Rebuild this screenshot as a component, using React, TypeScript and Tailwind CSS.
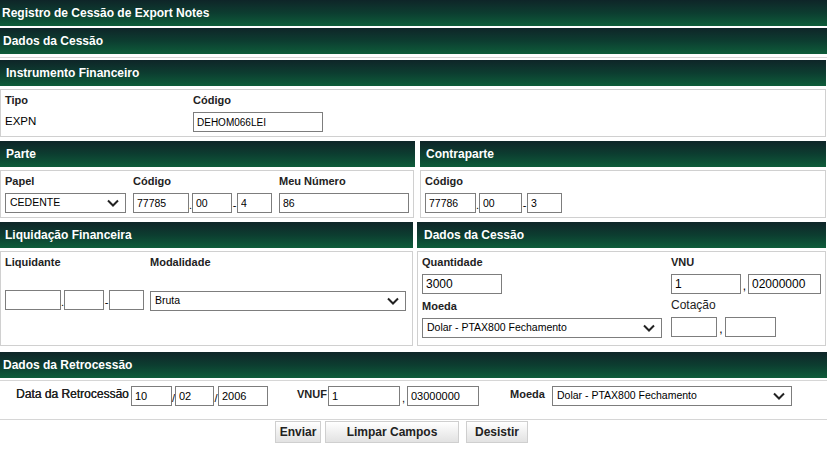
import React from "react";

const Hdr = ({ children, className = "" }: any) => (
  <div
    className={`h-[26px] flex items-center text-white font-bold text-[12px] bg-linear-to-b from-[#0e2528] via-[#0c3d30] to-[#0e5d3a] ${className}`}
  >
    {children}
  </div>
);

const Lbl = ({ children, className = "" }: any) => (
  <div className={`h-[14px] leading-[14px] text-[11px] font-bold text-[#222] whitespace-nowrap ${className}`}>
    {children}
  </div>
);

const Inp = ({ v = "", className = "" }: any) => (
  <input
    readOnly
    value={v}
    className={`h-[20px] border border-[#7d7d7d] bg-white px-[3px] text-[10.5px] text-black outline-none ${className}`}
  />
);

const Sel = ({ v, className = "" }: any) => (
  <div
    className={`h-[20px] border border-[#7d7d7d] bg-white pl-[4px] pr-[6px] flex items-center justify-between text-[10.5px] text-black ${className}`}
  >
    <span>{v}</span>
    <svg width="12" height="8" viewBox="0 0 12 8">
      <path d="M1 1.5 L6 6.5 L11 1.5" fill="none" stroke="#222" strokeWidth="2" />
    </svg>
  </div>
);

// little "." "-" "/" "," between the split inputs
const Sep = ({ c, className = "w-[3px]" }: any) => (
  <span className={`text-[11px] text-black flex items-end justify-center h-[20px] leading-[16px] ${className}`}>{c}</span>
);

const Box = ({ children, className = "" }: any) => (
  <div className={`border border-[#d0d0d0] bg-white ${className}`}>{children}</div>
);

const Btn = ({ children, className = "" }: any) => (
  <button
    className={`h-[22px] border border-[#cfcfcf] bg-linear-to-b from-white to-[#e2e2e2] ${className}`}
  >
    {children}
  </button>
);

export default function App() {
  return (
    <div
      className="w-[827px] h-[450px] bg-white overflow-hidden text-[#222]"
      style={{ fontFamily: '"Liberation Sans", Arial, sans-serif' }}
    >
      <Hdr className="h-[25px] pl-[2px]">Registro de Cessão de Export Notes</Hdr>
      <Hdr className="mt-[2px] pl-[3px]">Dados da Cessão</Hdr>
      <div className="mt-[3px] h-px bg-[#d6d6d6]" />

      <div className="mt-[2px] w-[826px]">
        <Hdr className="pl-[6px]">Instrumento Financeiro</Hdr>
        <Box className="mt-[3px] h-[48px] pt-[3px] pl-[4px] flex">
          <div className="w-[188px]">
            <Lbl>Tipo</Lbl>
            <div className="mt-[5px] h-[20px] flex items-center text-[11.5px] text-black">EXPN</div>
          </div>
          <div>
            <Lbl>Código</Lbl>
            <Inp v="DEHOM066LEI" className="mt-[5px] w-[130px] text-[10px]" />
          </div>
        </Box>
      </div>

      <div className="mt-[4px] flex w-[826px] justify-between">
        <div className="w-[415px]">
          <Hdr className="pl-[6px]">Parte</Hdr>
          <Box className="mt-[3px] h-[48px] pt-[3px] pl-[4px] w-[414px] flex">
            <div className="w-[128px]">
              <Lbl>Papel</Lbl>
              <Sel v="CEDENTE" className="mt-[5px] w-[121px]" />
            </div>
            <div className="w-[146px]">
              <Lbl>Código</Lbl>
              <div className="mt-[5px] flex">
                <Inp v="77785" className="w-[56px]" />
                <Sep c="." />
                <Inp v="00" className="w-[40px]" />
                <Sep c="-" className="w-[5px]" />
                <Inp v="4" className="w-[35px]" />
              </div>
            </div>
            <div>
              <Lbl>Meu Número</Lbl>
              <Inp v="86" className="mt-[5px] w-[130px]" />
            </div>
          </Box>
        </div>
        <div className="w-[406px]">
          <Hdr className="pl-[6px]">Contraparte</Hdr>
          <Box className="mt-[3px] h-[48px] pt-[3px] pl-[4px] w-[406px]">
            <Lbl>Código</Lbl>
            <div className="mt-[5px] flex">
              <Inp v="77786" className="w-[51px]" />
              <Sep c="." />
              <Inp v="00" className="w-[43px]" />
              <Sep c="-" className="w-[5px]" />
              <Inp v="3" className="w-[35px]" />
            </div>
          </Box>
        </div>
      </div>

      <div className="mt-[4px] flex w-[826px] justify-between">
        <div className="w-[413px]">
          <Hdr className="pl-[5px]">Liquidação Financeira</Hdr>
          <Box className="mt-[3px] h-[95px] pt-[3px] pl-[4px] w-[413px] flex">
            <div className="w-[145px]">
              <Lbl>Liquidante</Lbl>
              <div className="mt-[21px] flex">
                <Inp className="w-[56px]" />
                <Sep c="." />
                <Inp className="w-[40px]" />
                <Sep c="-" className="w-[5px]" />
                <Inp className="w-[35px]" />
              </div>
            </div>
            <div>
              <Lbl>Modalidade</Lbl>
              <Sel v="Bruta" className="mt-[22px] w-[256px]" />
            </div>
          </Box>
        </div>
        <div className="w-[409px]">
          <Hdr className="pl-[7px]">Dados da Cessão</Hdr>
          <Box className="mt-[3px] h-[95px] pt-[3px] pl-[4px] w-[409px] flex">
            <div className="w-[249px]">
              <Lbl>Quantidade</Lbl>
              <Inp v="3000" className="mt-[5px] w-[80px] text-[12px]" />
              <Lbl className="mt-[4px]">Moeda</Lbl>
              <Sel v="Dolar - PTAX800 Fechamento" className="mt-[5px] w-[240px]" />
            </div>
            <div>
              <Lbl>VNU</Lbl>
              <div className="mt-[5px] flex">
                <Inp v="1" className="w-[70px] text-[12px]" />
                <Sep c="," className="w-[7px] text-[12px]" />
                <Inp v="02000000" className="w-[73px] text-[12px]" />
              </div>
              <div className="mt-[4px] h-[14px] leading-[14px] text-[12px] text-[#222]">Cotação</div>
              <div className="mt-[5px] flex">
                <Inp className="w-[46px]" />
                <Sep c="," className="w-[8px] text-[12px]" />
                <Inp className="w-[51px]" />
              </div>
            </div>
          </Box>
        </div>
      </div>

      <Hdr className="mt-[6px] pl-[3px]">Dados da Retrocessão</Hdr>
      <div className="mt-[2px] h-[40px] border-t border-b border-[#d6d6d6] flex pt-[5px]">
        <div className="pl-[16px] w-[131px] h-[16px] leading-[16px] text-[12px] text-[#222] whitespace-nowrap [text-shadow:0.3px_0_0_#222]">
          Data da Retrocessão
        </div>
        <div className="flex">
          <Inp v="10" className="w-[41px] text-[11px]" />
          <Sep c="/" />
          <Inp v="02" className="w-[39px] text-[11px]" />
          <Sep c="/" className="w-[4px]" />
          <Inp v="2006" className="w-[50px] text-[11px]" />
        </div>
        <Lbl className="ml-[29px] w-[31px] leading-[16px]">VNUF</Lbl>
        <div className="flex">
          <Inp v="1" className="w-[72px] text-[11px]" />
          <Sep c="," className="w-[7px]" />
          <Inp v="03000000" className="w-[72px] text-[11px]" />
        </div>
        <Lbl className="ml-[31px] w-[42px] leading-[16px]">Moeda</Lbl>
        <Sel v="Dolar - PTAX800 Fechamento" className="w-[240px]" />
      </div>

      <div className="mt-[1px] flex pl-[275px] text-[12px] font-bold text-[#222]">
        <Btn className="w-[46px]">Enviar</Btn>
        <Btn className="ml-[4px] w-[134px]">Limpar Campos</Btn>
        <Btn className="ml-[7px] w-[62px]">Desistir</Btn>
      </div>
    </div>
  );
}
